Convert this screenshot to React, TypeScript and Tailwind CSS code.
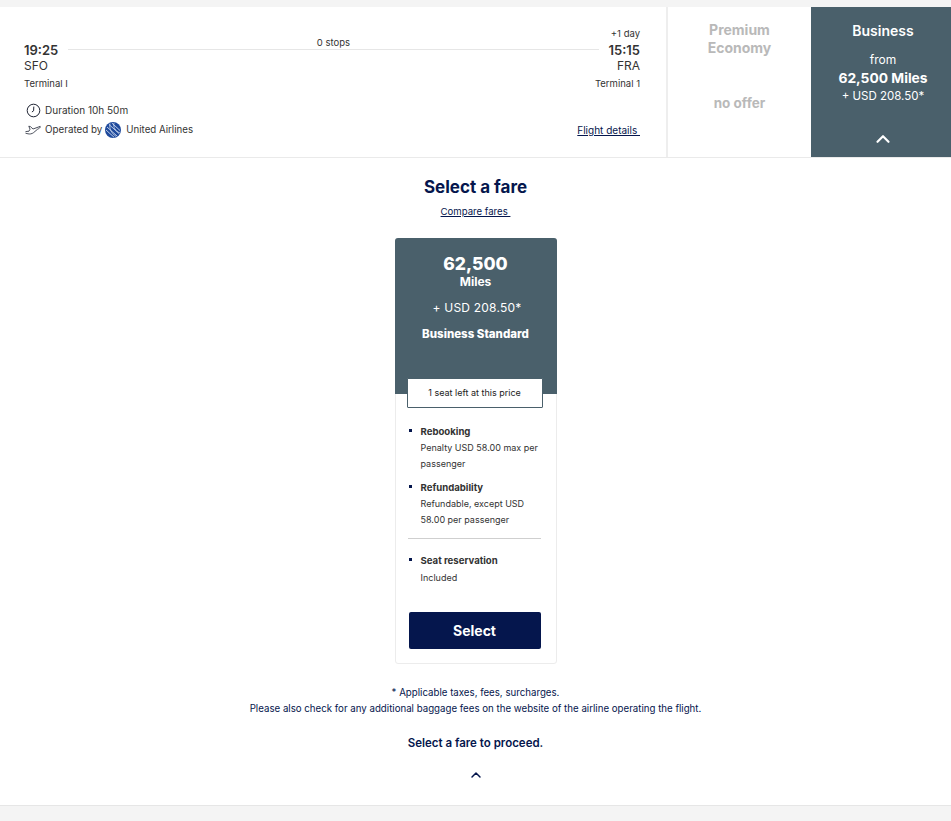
import { ChevronUp } from "lucide-react";

const navy = "text-[#05164d]";

function ClockIcon() {
  return (
    <svg width="15" height="15" viewBox="0 0 15 15" fill="none" stroke="#1f2433" strokeWidth="1">
      <circle cx="7.5" cy="7.5" r="6.3" />
      <path d="M7.8 3.6 L7.6 7.8 L5.9 9" />
    </svg>
  );
}

function PlaneIcon() {
  return (
    <svg width="16" height="10" viewBox="0 0 16 10" fill="none" stroke="#1f2433" strokeWidth="0.8">
      <path d="M0.5 6.6 L4 6.2 L5 4.2 L3.8 1.2 L5.4 1.6 L8 4 L15.2 1.4 C15.6 2.6 14 3.6 12.6 4.2 L8.6 7.6 C7 9 4.4 9.2 3 8.8 L0.5 8.2" />
    </svg>
  );
}

function UnitedLogo() {
  return (
    <svg width="16" height="16" viewBox="0 0 16 16">
      <circle cx="8" cy="8" r="8" fill="#1f4a9c" />
      <path d="M2 5 L12 14 M4 2.5 L14 11.5 M7 1.2 L15 8.5 M1 8 L9 15.2" stroke="#c9d8ee" strokeWidth="0.9" />
      <path d="M5 1.5 C4 6 6 11 11 14.5 M9 1 C8 5 10 9 15 11" stroke="#dfe8f5" strokeWidth="0.7" fill="none" />
    </svg>
  );
}

function Benefit({ title, children }: { title: string; children: React.ReactNode }) {
  return (
    <div className="flex">
      <span className="mt-[6px] ml-[1px] mr-[9px] h-[3px] w-[3px] shrink-0 bg-[#05164d]" />
      <div>
        <div className="text-[9.6px] leading-[17px] font-bold text-[#333]">{title}</div>
        <div className="text-[9px] leading-[16px] text-[#333]">{children}</div>
      </div>
    </div>
  );
}

export default function App() {
  return (
    <div className="flex min-h-[821px] flex-col bg-white font-['Inter',sans-serif]">
      <div className="h-[7px] bg-[#f4f4f4]" />

      <div className="flex h-[151px] border-b border-[#eaeaea]">
        <div className="relative w-[668px] border-r-2 border-[#eeeeee] pt-[35px] pr-[26px] pl-[24px] text-[#333]">
          <div className="absolute top-[21px] right-[26px] text-[9.5px] leading-[12px]">+1 day</div>
          <div className="flex items-center">
            <div className="text-[13px] leading-[16px] font-semibold">19:25</div>
            <div className="relative mx-[10px] mb-[2px] h-px flex-1 bg-[#e6e6e6]">
              <div className="absolute top-[-12px] left-0 w-full text-center text-[9.5px] leading-[12px]">0 stops</div>
            </div>
            <div className="text-[13px] leading-[16px] font-semibold">15:15</div>
          </div>
          <div className="flex justify-between text-[12px] leading-[15px]">
            <span>SFO</span>
            <span>FRA</span>
          </div>
          <div className="mt-[4px] flex justify-between text-[9.5px] leading-[14px]">
            <span>Terminal I</span>
            <span>Terminal 1</span>
          </div>
          <div className="mt-[10px] flex items-center gap-[4px] pl-[2px] text-[10px] leading-[19px]">
            <ClockIcon />
            <span>Duration 10h 50m</span>
          </div>
          <div className="flex items-center text-[10px] leading-[19px]">
            <span className="mr-[4px] ml-[1px]"><PlaneIcon /></span>
            <span className="text-[9.8px]">Operated by</span>
            <span className="mx-[3px]"><UnitedLogo /></span>
            <span className="ml-[2px] text-[9.7px]">United Airlines</span>
            <a className={`ml-auto translate-y-px text-[10px] underline ${navy}`}>Flight details&nbsp;</a>
          </div>
        </div>

        <div className="flex w-[143px] flex-col items-center pt-[14px] text-center font-bold text-[#b9b9b9]">
          <div className="text-[14px] leading-[18px]">Premium<br />Economy</div>
          <div className="mt-[37px] text-[13.5px] leading-[18px]">no offer</div>
        </div>

        <div className="flex w-[140px] flex-col items-center bg-[#4a606b] pt-[15px] pl-[4px] text-center text-white">
          <div className="text-[14px] leading-[18px] font-semibold">Business</div>
          <div className="mt-[11px] text-[12px] leading-[18px]">from</div>
          <div className="text-[13.8px] leading-[18px] font-bold">62,500 Miles</div>
          <div className="text-[11.5px] leading-[19px]">+ USD 208.50*</div>
          <ChevronUp className="mt-[22px] h-[22px] w-[22px]" strokeWidth={2.4} />
        </div>
      </div>

      <div className="flex flex-col items-center">
        <h2 className={`mt-[18px] text-[17px] leading-[22px] font-bold ${navy}`}>Select a fare</h2>
        <a className={`mt-[6px] text-[9.6px] leading-[16px] underline ${navy}`}>Compare fares&nbsp;</a>

        <div className="mt-[18px] w-[162px] rounded-[3px] border border-[#ececec] pb-[14px]">
          <div className="-m-px h-[156px] rounded-t-[3px] bg-[#4a606b] pt-[16px] text-center text-white">
            <div className="text-[17.5px] leading-[20px] font-extrabold">62,500</div>
            <div className="text-[12px] leading-[16px] font-bold">Miles</div>
            <div className="mt-[10px] pl-[3px] text-[12px] leading-[16px] tracking-[0.2px]">+ USD 208.50*</div>
            <div className="mt-[10px] text-[11.5px] leading-[16px] font-extrabold">Business Standard</div>
          </div>
          <div className="relative z-10 mr-[13px] ml-[11px] -mt-[16px] flex h-[30px] items-center justify-center rounded-[1px] border border-[#4a606b] bg-white text-[9px] text-[#222]">
            1 seat left at this price
          </div>
          <div className="mx-[12px] mt-[15px] flex flex-col gap-[7px]">
            <Benefit title="Rebooking">Penalty USD 58.00 max per passenger</Benefit>
            <Benefit title="Refundability">Refundable, except USD 58.00 per passenger</Benefit>
          </div>
          <div className="mt-[10px] mr-[15px] ml-[12px] border-t border-[#cfcfcf]" />
          <div className="mx-[12px] mt-[13px]">
            <Benefit title="Seat reservation">
              <span className="mt-px block">Included</span>
            </Benefit>
          </div>
          <button className="mx-[13px] mt-[26px] h-[37px] w-[132px] rounded-[2px] bg-[#05164d] text-[14px] font-bold text-white">
            Select
          </button>
        </div>

        <p className={`mt-[21px] text-[9.7px] leading-[16px] ${navy}`}>* Applicable taxes, fees, surcharges.</p>
        <p className={`text-[9.7px] leading-[16px] ${navy}`}>
          Please also check for any additional baggage fees on the website of the airline operating the flight.
        </p>
        <p className={`mt-[18px] text-[11.5px] leading-[16px] font-semibold ${navy}`}>Select a fare to proceed.</p>
        <ChevronUp className={`mt-[16px] h-[16px] w-[16px] ${navy}`} strokeWidth={2.2} />
      </div>

      <div className="mt-[22px] grow border-t border-[#e6e6e6] bg-[#f4f4f4]" />
    </div>
  );
}
